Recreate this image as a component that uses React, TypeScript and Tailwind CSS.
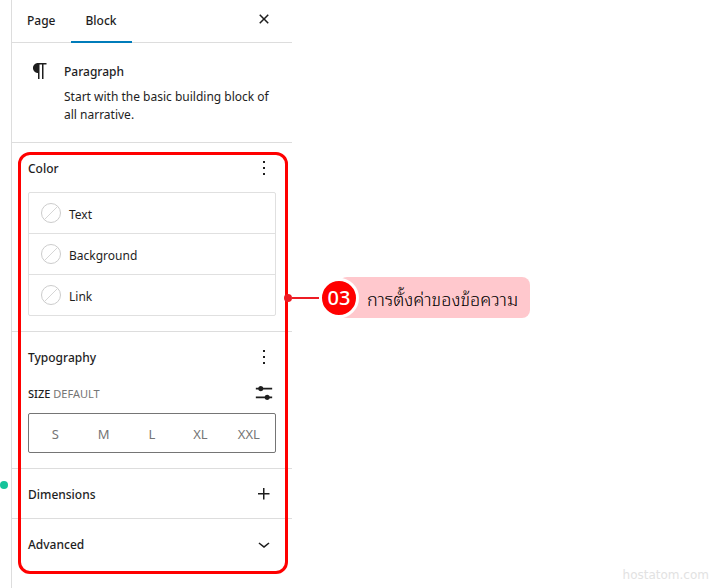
import { useState } from 'react';
import type { ReactNode } from 'react';
import clsx from 'clsx';

const COLORS = ['Text', 'Background', 'Link'];
const SIZES = ['S', 'M', 'L', 'XL', 'XXL'];

const ICONS = {
  close:
    'M12 13.06l3.712 3.713 1.061-1.06L13.061 12l3.712-3.712-1.06-1.06L12 10.938 8.288 7.227l-1.061 1.06L10.939 12l-3.712 3.712 1.06 1.061L12 13.061z',
  paragraph:
    'm9.996 14v-.225l.004 0v6.225h1.5v-14.5h2.5v14.5h1.5v-14.5h3v-1.5h-8.504c-2.761 0-5 2.239-5 5 0 2.761 2.239 5 5 5z',
  more: 'M13 19h-2v-2h2v2zm0-6h-2v-2h2v2zm0-6h-2V5h2v2z',
  settings:
    'm19 7.5h-7.628c-.309-.874-1.142-1.5-2.122-1.5-.98 0-1.813.626-2.122 1.5h-2.128v1.5h2.128c.309.874 1.142 1.5 2.122 1.5.98 0 1.813-.626 2.122-1.5h7.628zM19 15h-2.128c-.309-.874-1.142-1.5-2.122-1.5s-1.813.626-2.122 1.5h-7.628v1.5h7.628c.309.874 1.142 1.5 2.122 1.5s1.813-.626 2.122-1.5h2.128z',
  plus: 'M11 12.5V17.5H12.5V12.5H17.5V11H12.5V6H11V11H6V12.5H11Z',
  chevron: 'M17.5 11.6L12 16l-5.5-4.4.9-1.2L12 14l4.5-3.6 1 1.2z'
};

function Icon({ name, className = 'size-6' }: { name: keyof typeof ICONS; className?: string }) {
  return (
    <svg viewBox="0 0 24 24" fill="currentColor" aria-hidden="true" className={clsx('shrink-0', className)}>
      <path d={ICONS[name]} />
    </svg>
  );
}

function Panel({ title, icon, label, children }: {
  title: string;
  icon: keyof typeof ICONS;
  label: string;
  children?: ReactNode;
}) {
  return (
    <section className="border-t border-[#ddd] px-4">
      <div className="flex h-[49px] items-center justify-between">
        <h2 className="pt-[2px] font-medium">{title}</h2>
        <button type="button" aria-label={label}>
          <Icon name={icon} />
        </button>
      </div>
      {children && <div className="pb-[15px]">{children}</div>}
    </section>
  );
}

function Callout() {
  return (
    <div className="-ml-2 flex items-center self-start pt-[277px]">
      <span className="z-10 size-2 rounded-full bg-[#ed1c24]" />
      <span className="h-[2px] w-[27px] bg-[#ed1c24]" />
      <span className="z-10 flex size-10 items-center justify-center rounded-full border-3 border-white bg-[#f00] text-xl font-medium text-white">
        03
      </span>
      <p className="-ml-5 flex h-[41px] items-center rounded-lg bg-[#ffc8cd] pr-3 pl-7 font-['Noto_Sans_Thai_Looped','Loma','Noto_Sans_Thai',sans-serif] text-lg font-light whitespace-nowrap text-black">
        การตั้งค่าของข้อความ
      </p>
    </div>
  );
}

export default function App() {
  const [tab, setTab] = useState('Block');
  const [size, setSize] = useState('');

  return (
    <div className="flex min-h-screen bg-white font-['Noto_Sans',sans-serif] text-xs text-[#1e1e1e]">
      <div className="w-[11px] shrink-0 pt-[481px]">
        <div className="size-2 rounded-full bg-[#15c39a]" />
      </div>

      <aside className="w-[281px] shrink-0 border-l border-[#ddd]">
        <div className="flex h-[43px] border-b border-[#ddd]">
          {['Page', 'Block'].map(name => (
            <button
              key={name}
              type="button"
              onClick={() => setTab(name)}
              className={clsx(
                'h-[43px] border-b-2 px-[15px] font-medium',
                tab === name ? 'border-[#007cba]' : 'border-transparent'
              )}
            >
              {name}
            </button>
          ))}
          <button type="button" aria-label="Close settings" className="mr-4 mb-1 ml-auto">
            <Icon name="close" />
          </button>
        </div>

        <div className="flex gap-3 p-4 pb-[18px]">
          <Icon name="paragraph" />
          <div className="pt-px">
            <h2 className="leading-6 font-medium">Paragraph</h2>
            <p className="mt-1 leading-[18px]">Start with the basic building block of all narrative.</p>
          </div>
        </div>

        <div className="relative">
          <Panel title="Color" icon="more" label="Color options">
            <div className="divide-y divide-[#e0e0e0] rounded-xs border border-[#e0e0e0]">
              {COLORS.map(name => (
                <div key={name}>
                  <button type="button" className="flex h-10 w-full items-center gap-2 px-3">
                    <svg viewBox="0 0 20 20" className="size-5" fill="none" stroke="#ccc" aria-hidden="true">
                      <circle cx="10" cy="10" r="9.5" />
                      <path d="M3.5 16.5l13-13" strokeWidth="0.8" />
                    </svg>
                    <span className="pt-1">{name}</span>
                  </button>
                </div>
              ))}
            </div>
          </Panel>

          <Panel title="Typography" icon="more" label="Typography options">
            <fieldset>
              <div className="flex h-8 items-start justify-between">
                <legend className="pt-px text-[11px] leading-6 font-medium uppercase">
                  Size <span className="font-normal text-[#757575]">Default</span>
                </legend>
                <button type="button" aria-label="Set custom size" className="-mt-[2px] -mr-[2px]">
                  <Icon name="settings" className="size-7" />
                </button>
              </div>
              <div className="flex h-10 rounded-xs border border-[#757575] px-[2px]">
                {SIZES.map(name => (
                  <label key={name} className="flex flex-1 items-center justify-center pt-1 text-[13px] text-[#757575] has-checked:bg-[#1e1e1e] has-checked:text-white">
                    <input
                      type="radio"
                      name="size"
                      value={name}
                      checked={size === name}
                      onChange={() => setSize(name)}
                      className="sr-only"
                    />
                    {name}
                  </label>
                ))}
              </div>
            </fieldset>
          </Panel>

          <Panel title="Dimensions" icon="plus" label="Dimensions options" />
          <Panel title="Advanced" icon="chevron" label="Toggle advanced" />

          <div className="pointer-events-none absolute top-[10px] right-1 -bottom-[6px] left-[6px] rounded-xl border-3 border-[#f00]" />
        </div>
      </aside>

      <Callout />

      <footer className="mr-[11px] mb-[5px] ml-auto self-end font-['DejaVu_Sans',sans-serif] text-xs text-[#e2e2e2]">
        hostatom.com
      </footer>
    </div>
  );
}
